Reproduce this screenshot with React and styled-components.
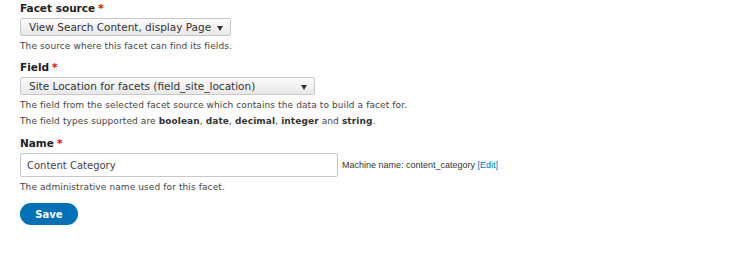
import styled, { createGlobalStyle } from "styled-components";

const GlobalStyle = createGlobalStyle`
  html, body {
    margin: 0;
    padding: 0;
    background: #fff;
  }
  body {
    font-family: "DejaVu Sans", Verdana, sans-serif;
    color: #333;
  }
`;

const Form = styled.form`
  display: flex;
  flex-direction: column;
  padding: 1px 0 0 20px;
`;

const FormItem = styled.div`
  display: flex;
  flex-direction: column;
  align-items: flex-start;
  margin-top: ${({ gap }) => gap || 0}px;
`;

const Label = styled.label`
  font-size: 10.5px;
  font-weight: bold;
  line-height: 14px;
  color: #222;
  margin-bottom: 3px;
`;

const Required = styled.span`
  color: #e00;
  margin-left: 3px;
`;

const SelectBox = styled.div`
  position: relative;
  box-sizing: border-box;
  width: ${({ width }) => width}px;
  height: 18px;
  padding: 0 20px 0 8px;
  display: flex;
  align-items: center;
  font-size: 10.5px;
  color: #333;
  border: 1px solid #c8c8c8;
  border-radius: 2px;
  background: linear-gradient(#fbfbfb, #e8e8e8);
  white-space: nowrap;
`;

const Arrow = styled.span`
  position: absolute;
  right: 7px;
  top: 7px;
  width: 0;
  height: 0;
  border-left: 3.5px solid transparent;
  border-right: 3.5px solid transparent;
  border-top: 5px solid #333;
`;

const Description = styled.div`
  font-size: 9px;
  line-height: 16px;
  color: #444;
  margin-top: 2px;
  letter-spacing: 0.1px;

  b {
    color: #333;
  }
`;

const InputRow = styled.div`
  display: flex;
  align-items: center;
  gap: 4px;
`;

const TextInput = styled.div`
  box-sizing: border-box;
  width: 318px;
  height: 24px;
  padding: 0 6px;
  display: flex;
  align-items: center;
  font-size: 10px;
  color: #444;
  border: 1px solid #c8c8c8;
  border-radius: 2px;
  background: #fff;
`;

const MachineName = styled.span`
  font-family: "Liberation Sans", Arial, sans-serif;
  font-size: 9px;
  color: #333;

  a {
    color: #0074bd;
    text-decoration: none;
  }
`;

const SaveButton = styled.button`
  margin-top: 8px;
  width: 58px;
  height: 22px;
  border: none;
  border-radius: 11px;
  background: #0071b8;
  color: #fff;
  font-family: "DejaVu Sans", Verdana, sans-serif;
  font-weight: bold;
  font-size: 10px;
  padding: 0;
  align-self: flex-start;
`;

const Select = ({ width, children }) => (
  <SelectBox width={width}>
    {children}
    <Arrow />
  </SelectBox>
);

export default function App() {
  return (
    <>
      <GlobalStyle />
      <Form>
        <FormItem>
          <Label>
            Facet source<Required>*</Required>
          </Label>
          <Select width={211}>View Search Content, display Page</Select>
          <Description>The source where this facet can find its fields.</Description>
        </FormItem>
        <FormItem gap={6}>
          <Label>
            Field<Required>*</Required>
          </Label>
          <Select width={295}>Site Location for facets (field_site_location)</Select>
          <Description>
            The field from the selected facet source which contains the data to build a facet for.
            <br />
            The field types supported are <b>boolean</b>, <b>date</b>, <b>decimal</b>,{" "}
            <b>integer</b> and <b>string</b>.
          </Description>
        </FormItem>
        <FormItem gap={7}>
          <Label>
            Name<Required>*</Required>
          </Label>
          <InputRow>
            <TextInput>Content Category</TextInput>
            <MachineName>
              Machine name: content_category <a href="#">[Edit]</a>
            </MachineName>
          </InputRow>
          <Description>The administrative name used for this facet.</Description>
        </FormItem>
        <SaveButton type="button">Save</SaveButton>
      </Form>
    </>
  );
}
